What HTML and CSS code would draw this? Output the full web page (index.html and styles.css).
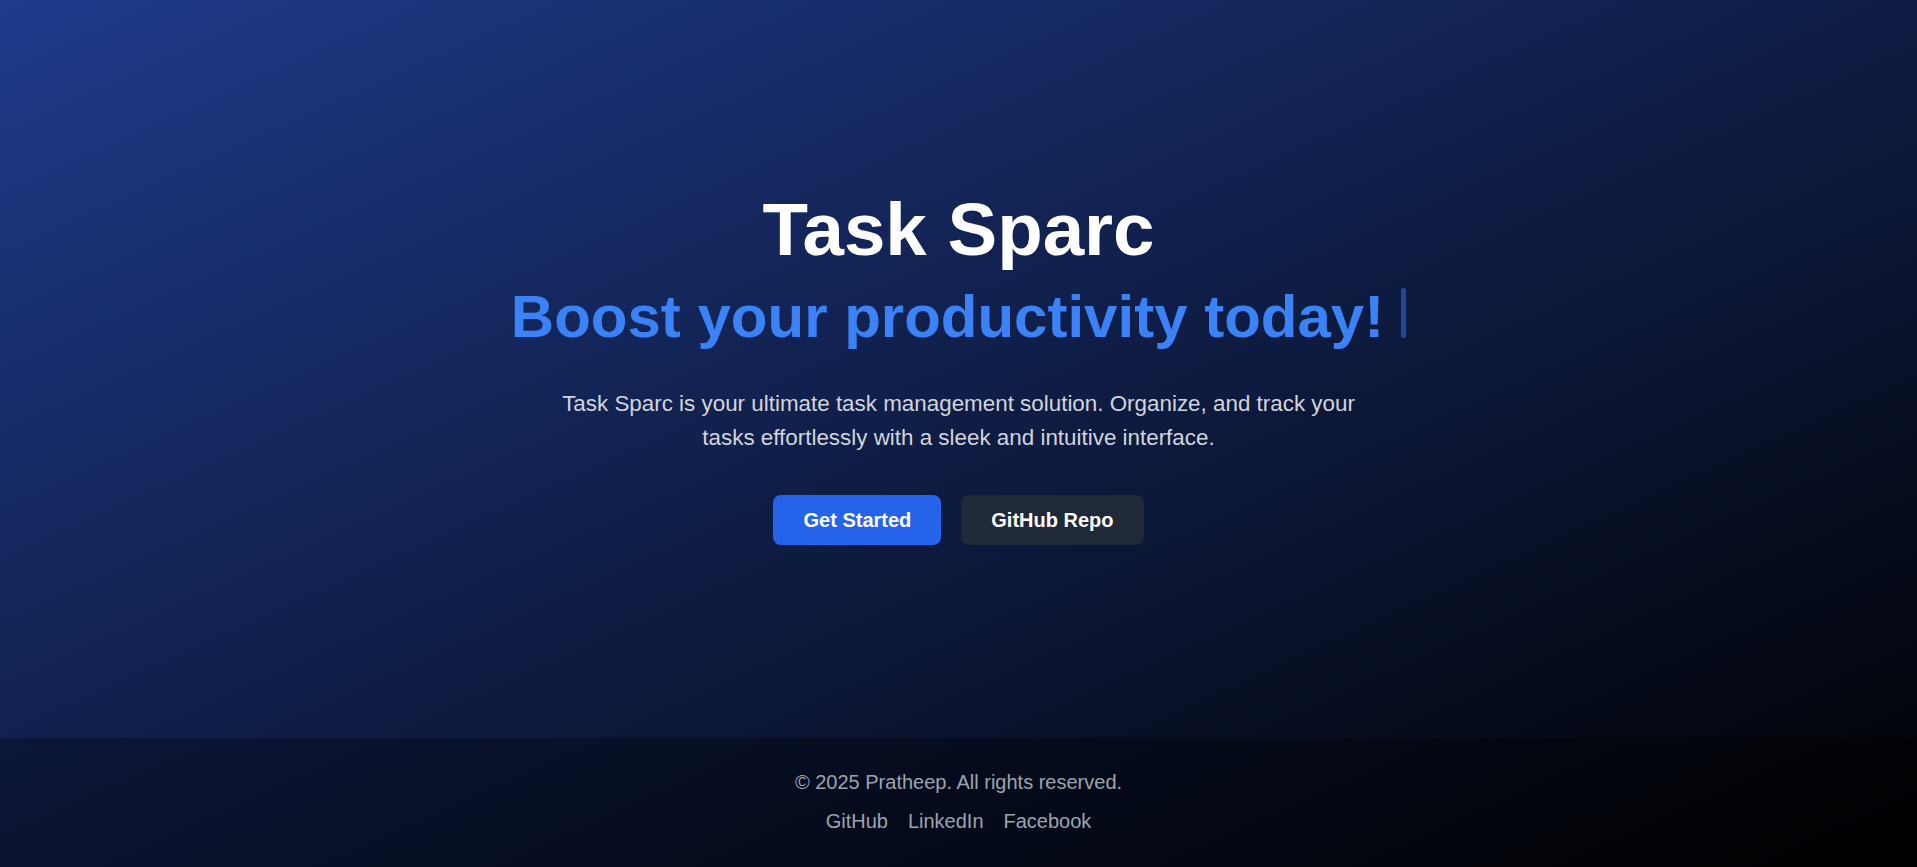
FILE: index.html
```html
<!DOCTYPE html>
<html lang="en">
<head>
<meta charset="utf-8">
<title>Task Sparc</title>
<link rel="stylesheet" href="styles.css">
</head>
<body>
<main class="hero">
  <h1 class="title">Task Sparc</h1>
  <h2 class="tagline"><span class="tagline-text">Boost your productivity today!</span><span class="caret"></span></h2>
  <p class="desc">Task Sparc is your ultimate task management solution. Organize, and track your tasks effortlessly with a sleek and intuitive interface.</p>
  <div class="actions">
    <a class="btn btn-primary" href="#">Get Started</a>
    <a class="btn btn-dark" href="#">GitHub Repo</a>
  </div>
</main>
<footer class="footer">
  <p class="copy">© 2025 Pratheep. All rights reserved.</p>
  <nav class="links">
    <a href="#">GitHub</a>
    <a href="#">LinkedIn</a>
    <a href="#">Facebook</a>
  </nav>
</footer>
</body>
</html>
```

FILE: styles.css
```css
html, body {
  margin: 0;
  padding: 0;
  height: 100%;
}
body {
  min-height: 100vh;
  display: flex;
  flex-direction: column;
  background: linear-gradient(to bottom right, #1e3a8a, #000000);
  font-family: "Liberation Sans", Arial, sans-serif;
  color: #ffffff;
}
.hero {
  flex: 1;
  display: flex;
  flex-direction: column;
  align-items: center;
  justify-content: center;
  text-align: center;
}
.title {
  margin: 0 0 20px;
  font-size: 74.5px;
  line-height: 1;
  font-weight: 700;
  color: #ffffff;
}
.tagline {
  margin: 0 0 40px;
  display: flex;
  align-items: flex-start;
  font-size: 60px;
  line-height: 1;
  font-weight: 700;
  color: #3b82f6;
}
.caret {
  display: block;
  width: 5px;
  height: 50px;
  margin: 1px 0 0 17px;
  border-radius: 3px;
  background: rgba(59, 130, 246, 0.45);
}
.desc {
  margin: 0 0 41px;
  max-width: 820px;
  font-size: 22.4px;
  line-height: 33.6px;
  color: #d1d5db;
}
.actions {
  display: flex;
  gap: 20px;
}
.btn {
  display: block;
  padding: 12px 30px;
  border-radius: 8px;
  font-size: 20px;
  line-height: 26px;
  font-weight: 700;
  color: #ffffff;
  text-decoration: none;
}
.btn-primary {
  background: #2563eb;
}
.btn-dark {
  background: #1f2937;
}
.footer {
  padding: 30px 0 32px;
  background: rgba(0, 0, 0, 0.3);
  text-align: center;
  color: #9ca3af;
  font-size: 20px;
  line-height: 28px;
}
.copy {
  margin: 0;
}
.links {
  margin-top: 11px;
  display: flex;
  justify-content: center;
  gap: 20px;
}
.links a {
  color: #9ca3af;
  text-decoration: none;
}
```
